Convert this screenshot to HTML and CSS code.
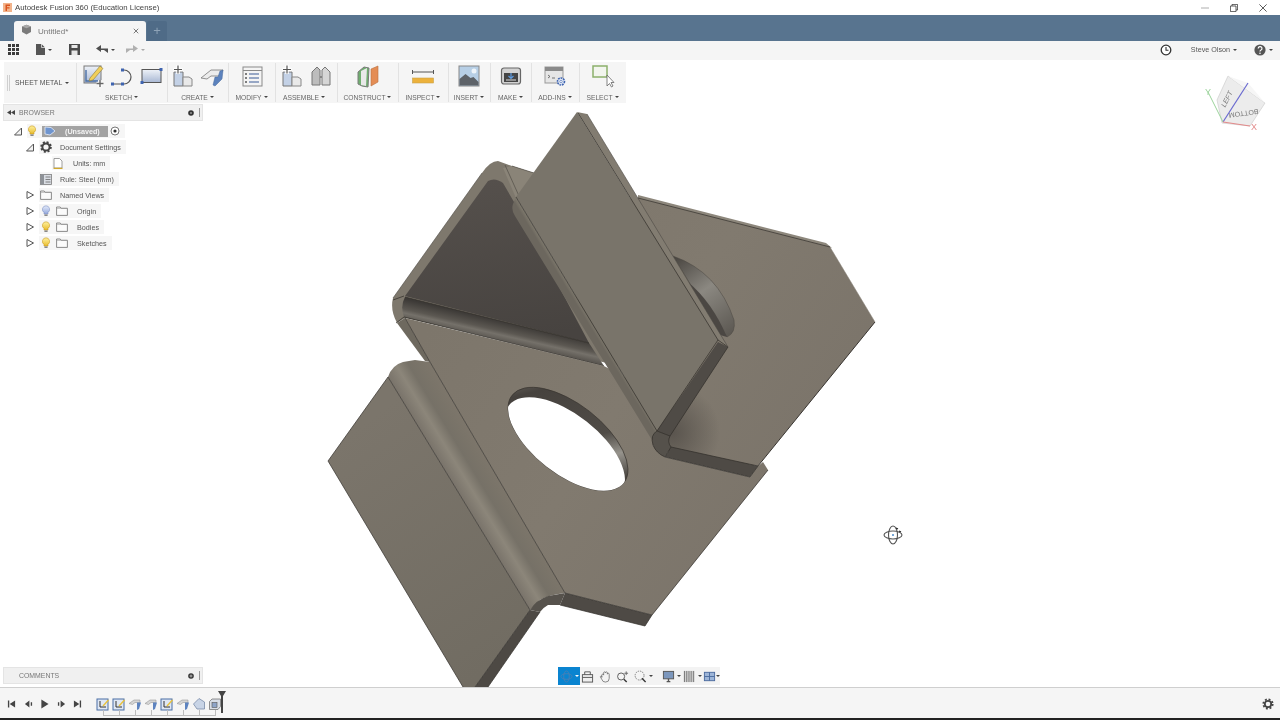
FILE: index.html
```html
<!DOCTYPE html>
<html lang="en">
<head>
<meta charset="utf-8">
<title>Autodesk Fusion 360 (Education License)</title>
<link rel="stylesheet" href="styles.css">
</head>
<body>
<svg class="sprite" aria-hidden="true">
  <defs>
    <linearGradient id="gBlue" x1="0" y1="0" x2="0" y2="1"><stop offset="0" stop-color="#eef2f8"/><stop offset="1" stop-color="#a9b8d4"/></linearGradient>
    <linearGradient id="gBulb" x1="0" y1="0" x2="0" y2="1"><stop offset="0" stop-color="#fff2a0"/><stop offset="1" stop-color="#e8bb2c"/></linearGradient>
    <linearGradient id="gBulbB" x1="0" y1="0" x2="0" y2="1"><stop offset="0" stop-color="#e4ebfa"/><stop offset="1" stop-color="#93a8dc"/></linearGradient>
  </defs>
  <symbol id="bulb" viewBox="0 0 10 12"><path d="M5 .8a3.6 3.6 0 0 0-2 6.6V9h4V7.4A3.6 3.6 0 0 0 5 .8z" fill="url(#gBulb)" stroke="#c99a22" stroke-width=".6"/><rect x="3.4" y="9.4" width="3.2" height="1.6" fill="#8a8a8a"/></symbol>
  <symbol id="bulbOff" viewBox="0 0 10 12"><path d="M5 .8a3.6 3.6 0 0 0-2 6.6V9h4V7.4A3.6 3.6 0 0 0 5 .8z" fill="url(#gBulbB)" stroke="#7f92c4" stroke-width=".6"/><rect x="3.4" y="9.4" width="3.2" height="1.6" fill="#8a8a8a"/></symbol>
  <symbol id="folder" viewBox="0 0 12 10"><path d="M.6 9.4V1h3.6l1 1.3h6.2v7.1z" fill="#fbfbfb" stroke="#6f6f6f" stroke-width=".8"/><path d="M.6 2.4h10.8" stroke="#9a9a9a" stroke-width=".6"/></symbol>
  <symbol id="open" viewBox="0 0 10 10"><path d="M1.5 9L8.5 2V9Z" fill="#f2f2f2" stroke="#555" stroke-width="1"/></symbol>
  <symbol id="closed" viewBox="0 0 10 10"><path d="M2 1.5L8.5 5 2 8.5Z" fill="#fff" stroke="#555" stroke-width="1"/></symbol>
  <symbol id="tlSketch" viewBox="0 0 14 14"><rect x="1" y="2" width="11" height="11" fill="#dfe7f4" stroke="#4a6fa5" stroke-width="1"/><path d="M4 4v6h6" fill="none" stroke="#333" stroke-width="1"/><path d="M6.5 8.5L12 2.5l1 1-5.5 6z" fill="#e8c23a"/></symbol>
  <symbol id="tlFlange" viewBox="0 0 14 14"><path d="M1 6.5L6 3h6v2.5H7L4.5 7.5z" fill="#d5d5d5" stroke="#888" stroke-width=".5"/><path d="M9 5.5h4L11 12 9 13z" fill="#5d83bf"/></symbol>
  <symbol id="tlCut" viewBox="0 0 14 14"><path d="M1.5 7L7 1.5 12.5 5v7H5z" fill="#c8d4e6" stroke="#7a8ca8" stroke-width=".8"/></symbol>
  <symbol id="tlBox" viewBox="0 0 14 14"><path d="M1.5 4.5L4 2h8.5v7.5L10 12.5H1.5z" fill="#d8dde6" stroke="#777" stroke-width=".8"/><rect x="4" y="5.5" width="5" height="5" fill="#8ea4c8" stroke="#555" stroke-width=".6"/></symbol>
</svg>

<div class="app">
  <header class="titlebar">
    <svg class="app-logo" viewBox="0 0 9 9"><rect width="9" height="9" fill="#f2b48c"/><path d="M2.5 1.5h4.5v1.4H4v1.4h2.5v1.3H4v2.4H2.5z" fill="#d9541e"/></svg>
    <span class="title-text">Autodesk Fusion 360 (Education License)</span>
    <div class="winctl">
      <svg viewBox="0 0 10 10"><path d="M0 5h10" stroke="#9a9a9a"/></svg>
      <svg viewBox="0 0 10 10"><path d="M.5 2.5h7v7h-7zM2.5 2.5v-2h7v7h-2" fill="none" stroke="#333"/></svg>
      <svg viewBox="0 0 10 10"><path d="M.5.5l9 9M9.5.5l-9 9" stroke="#333"/></svg>
    </div>
  </header>

  <div class="tabbar">
    <div class="tab">
      <svg class="tab-cube" viewBox="0 0 11 11"><path d="M1 2.5L5.5.8 10 2.5v5.5L5.5 10.5 1 8z" fill="#7b7b7b"/><path d="M1 2.5L5.5 4.2 10 2.5 5.5.8z" fill="#a8a8a8"/></svg>
      <span class="tab-name">Untitled*</span>
      <svg class="tab-close" viewBox="0 0 8 8"><path d="M1 1l6 6M7 1L1 7" stroke="#777" stroke-width="1.3"/></svg>
    </div>
    <div class="tab-new">+</div>
  </div>

  <div class="qat">
    <svg class="q-grid" viewBox="0 0 11 11"><g fill="#3c3c3c"><rect width="3" height="3"/><rect x="4" width="3" height="3"/><rect x="8" width="3" height="3"/><rect y="4" width="3" height="3"/><rect x="4" y="4" width="3" height="3"/><rect x="8" y="4" width="3" height="3"/><rect y="8" width="3" height="3"/><rect x="4" y="8" width="3" height="3"/><rect x="8" y="8" width="3" height="3"/></g></svg>
    <svg class="q-file" viewBox="0 0 9 11"><path d="M0 0h5.5L9 3.5V11H0z" fill="#555"/><path d="M5.5 0v3.5H9" fill="none" stroke="#f5f5f5" stroke-width=".7"/></svg>
    <i class="caret q-c1"></i>
    <svg class="q-save" viewBox="0 0 11 11"><path d="M0 0h11v11H0z" fill="#4a4a4a"/><rect x="2.5" y="1" width="6" height="3" fill="#e8e8e8"/><rect x="2.5" y="6.5" width="6" height="4.5" fill="#e8e8e8"/></svg>
    <svg class="q-undo" viewBox="0 0 12 9"><path d="M5 0L0 3.5 5 7V5h3l4 3V3.5H5z" fill="#4f4f4f"/></svg>
    <i class="caret q-c2"></i>
    <svg class="q-redo" viewBox="0 0 12 9"><path d="M7 0l5 3.5L7 7V5H4L0 8V3.5h7z" fill="#b0b0b0"/></svg>
    <i class="caret caret-light q-c3"></i>
    <div class="q-right">
      <svg class="q-clock" viewBox="0 0 12 12"><circle cx="6" cy="6" r="4.8" fill="#fff" stroke="#333" stroke-width="1.3"/><path d="M6 3v3.2h2.5" fill="none" stroke="#333" stroke-width="1.1"/></svg>
      <span class="user">Steve Olson</span><i class="caret q-c4"></i>
      <svg class="q-help" viewBox="0 0 12 12"><circle cx="6" cy="6" r="5.6" fill="#555"/><path d="M4.2 4.5a1.9 1.9 0 1 1 2.6 1.7c-.6.3-.8.5-.8 1.2" fill="none" stroke="#fff" stroke-width="1.2"/><circle cx="6" cy="9.2" r=".8" fill="#fff"/></svg>
      <i class="caret"></i>
    </div>
  </div>

  <main class="workspace">
    <svg class="model" viewBox="0 60 1280 627" aria-hidden="true">
      <defs>
        <linearGradient id="plate" gradientUnits="userSpaceOnUse" x1="420" y1="340" x2="760" y2="560"><stop offset="0" stop-color="#7d766b"/><stop offset=".5" stop-color="#817a6f"/><stop offset="1" stop-color="#7b746a"/></linearGradient>
        <linearGradient id="flangeL" gradientUnits="userSpaceOnUse" x1="340" y1="440" x2="500" y2="660"><stop offset="0" stop-color="#7b756b"/><stop offset="1" stop-color="#716c62"/></linearGradient>
        <linearGradient id="bendL" gradientUnits="userSpaceOnUse" x1="388" y1="377" x2="425.300" y2="354.300"><stop offset="0" stop-color="#79736a"/><stop offset=".3" stop-color="#8c867a"/><stop offset=".55" stop-color="#767167"/><stop offset=".8" stop-color="#7a7469"/><stop offset="1" stop-color="#7d766b"/></linearGradient>
        <linearGradient id="bendU" gradientUnits="userSpaceOnUse" x1="522" y1="215" x2="531" y2="209.500"><stop offset="0" stop-color="#6c675e"/><stop offset=".45" stop-color="#827d70"/><stop offset="1" stop-color="#78736a"/></linearGradient>
        <linearGradient id="bendB" gradientUnits="userSpaceOnUse" x1="498" y1="320" x2="493" y2="342"><stop offset="0" stop-color="#3c3936"/><stop offset=".45" stop-color="#5c5852"/><stop offset=".62" stop-color="#75716a"/><stop offset="1" stop-color="#4f4b46"/></linearGradient>
        <linearGradient id="inner" gradientUnits="userSpaceOnUse" x1="480" y1="180" x2="500" y2="340"><stop offset="0" stop-color="#55504c"/><stop offset="1" stop-color="#474340"/></linearGradient>
        <linearGradient id="ring" gradientUnits="userSpaceOnUse" x1="512" y1="395" x2="625" y2="483"><stop offset="0" stop-color="#6a665f"/><stop offset=".12" stop-color="#46423e"/><stop offset=".52" stop-color="#504c47"/><stop offset=".68" stop-color="#96938c"/><stop offset=".85" stop-color="#4a4641"/><stop offset="1" stop-color="#4a4641"/></linearGradient>
        <linearGradient id="moon" gradientUnits="userSpaceOnUse" x1="675" y1="258" x2="732" y2="335"><stop offset="0" stop-color="#4a4641"/><stop offset=".45" stop-color="#8b8881"/><stop offset="1" stop-color="#5b5751"/></linearGradient>
        <radialGradient id="shadow" gradientUnits="userSpaceOnUse" cx="672" cy="432" r="48"><stop offset="0" stop-color="#55504a" stop-opacity=".9"/><stop offset="1" stop-color="#55504a" stop-opacity="0"/></radialGradient>
        <clipPath id="holeClip"><ellipse cx="568" cy="439" rx="71" ry="35" transform="rotate(38 568 439)"/></clipPath>
        <clipPath id="rightClip"><polygon points="638,198 830,247 875,322 758,466 660,450 640,400"/></clipPath>
      </defs>

      <!-- right plate -->
      <polygon points="638,195 826,243 832,248 638,200" fill="#8d877c"/>
      <polygon points="638,198 830,247 875,322 758,466 660,450 640,400 600,200" fill="url(#plate)"/>
      <circle cx="672" cy="432" r="48" fill="url(#shadow)" clip-path="url(#rightClip)"/>
      <path d="M638,198L830,247" stroke="#3e3a35" stroke-width=".8" fill="none"/>
      <path d="M875,322L758,466" stroke="#37332f" stroke-width="1" fill="none"/>
      <path d="M830,247L875,322" stroke="#8a847a" stroke-width=".5" fill="none"/>
      <path d="M673,256Q718,272 734,320Q736,333 727,337L700,300Z" fill="url(#moon)" stroke="#4a4641" stroke-width=".5"/>
      <path d="M688,282Q712,302 727,337L720,335Z" fill="#4b4743"/>

      <!-- raised back flange with its dark interior -->
      <path d="M393,298L482,173Q490,161 498,161L512,166L534,173L516,198L530,230L625,367L405,318L397,323Q390,310 393,298Z" fill="#7e786d"/>
      <path d="M482,173L393,298" stroke="#4e4a45" stroke-width=".6" fill="none"/>
      <polygon points="503,168 512,166 534,173 516,198" fill="#8a8478"/>
      <path d="M505,165L519,196M512,166L534,173" stroke="#4a463f" stroke-width=".6" fill="none"/>
      <path d="M405,296L488,181Q495,177 503,183L514,202L589,343Z" fill="url(#inner)"/>
      <path d="M405,297L589,343L604,366L404,317Q400,306 405,297Z" fill="url(#bendB)"/>
      <path d="M405,297L589,343M404,317L604,366M404,296L393,300M404,317L396,323" stroke="#2f2c28" stroke-width=".7" fill="none"/>

      <!-- main plate -->
      <polygon points="397,323 405,318 430,362 425,361" fill="#6e695f"/>
      <polygon points="405,318 604,366 630,380 657,431 653,445 665,457 750,477 757,467 763,462 768,470 652,615 565,593 430,362" fill="url(#plate)"/>
      <path d="M405,318L430,362M768,470L652,615" stroke="#3a3631" stroke-width=".8" fill="none"/>
      <ellipse cx="568" cy="439" rx="71" ry="35" transform="rotate(38 568 439)" fill="url(#ring)" stroke="#3a3631" stroke-width=".7"/>
      <g clip-path="url(#holeClip)"><ellipse cx="565" cy="449" rx="71" ry="35" transform="rotate(38 565 449)" fill="#fff"/></g>

      <!-- left flange -->
      <polygon points="328,461 388,377 530,610 475,687 463,687" fill="url(#flangeL)"/>
      <path d="M388,377Q392,365 403,362L415,360L430,362L565,593Q548,595 540,600L530,610Z" fill="url(#bendL)"/>
      <polygon points="530,610 540,612 488,687 475,687" fill="#4d4944"/>
      <path d="M530,610Q536,600 548,596L565,593L560,605L548,605Q544,607 540,612Z" fill="#56524c"/>
      <polygon points="565,593 652,615 645,626 560,605" fill="#4e4a45"/>
      <path d="M388,377L530,610M430,362L565,593M530,610L475,687M540,612L488,687M565,593L652,615M560,605L645,626L652,615M328,461L388,377M328,461L463,687" stroke="#312e2a" stroke-width=".7" fill="none"/>

      <!-- upright flange -->
      <path d="M516,197L513,204Q511,210 515,216L655,445L665,440L657,431Z" fill="url(#bendU)"/>
      <polygon points="577,112 718,340 657,431 516,197" fill="#79746a"/>
      <polygon points="577,112 587,114 728,347 718,340" fill="#827c71"/>
      <polygon points="718,342 728,347 670,436 657,431" fill="#4f4b46"/>
      <path d="M657,431Q650,435 653,445Q656,453 665,457L671,447Q667,442 670,436Z" fill="#55514b"/>
      <polygon points="671,447 758,466 750,477 665,457" fill="#4e4a45"/>
      <path d="M578,113L718,340L728,347M718,340L657,431L516,197M728,347L670,436Q667,442 671,447L758,466L750,477L665,457Q656,453 653,445Q650,435 657,431M657,431L670,436M665,457L671,447" stroke="#2f2c28" stroke-width=".7" fill="none"/>
      <path d="M587,114L728,347" stroke="#4e4a44" stroke-width=".6" fill="none"/>
    </svg>

    <div class="ribbon">
      <div class="group g-sheet">
        <div class="grip"></div>
        <span class="workspace-name">SHEET METAL</span><i class="caret"></i>
      </div>
      <div class="group g-sketch">
        <div class="icons">
          <svg class="ico" viewBox="0 0 24 24"><rect x="3" y="2" width="17" height="17" fill="url(#gBlue)" stroke="#7a7a7a"/><path d="M5 6v11h12" fill="none" stroke="#4a6fa5" stroke-width="1.4"/><path d="M9 14L19 2l3 2.5L12 16l-4 1z" fill="#f1cf5a" stroke="#8b7a3a" stroke-width=".6"/><path d="M19 16v7M15.500 19.500h7" stroke="#fff" stroke-width="3.500"/><path d="M19 16v7M15.500 19.500h7" stroke="#666" stroke-width="1.400"/></svg>
          <svg class="ico" viewBox="0 0 24 24"><path d="M3 20h11a6.500 6.500 0 0 0 0-14h-1.500" fill="none" stroke="#555" stroke-width="1.200"/><rect x="1" y="18.500" width="3" height="3" fill="#3f64b0"/><rect x="11" y="18.500" width="3" height="3" fill="#3f64b0"/><rect x="11" y="4.500" width="3" height="3" fill="#3f64b0"/></svg>
          <svg class="ico" viewBox="0 0 24 24"><rect x="3" y="5.500" width="19" height="13" fill="url(#gBlue)" stroke="#555"/><rect x="20.500" y="4" width="3" height="3" fill="#3f64b0"/><rect x="1.500" y="17" width="3" height="3" fill="#3f64b0"/></svg>
        </div>
        <span class="lbl">SKETCH</span>
      </div>
      <div class="group g-create">
        <div class="icons">
          <svg class="ico" viewBox="0 0 24 24"><path d="M3 8h9V22H3z" fill="#c3d1e6" stroke="#777"/><path d="M12 13h6l3 2v7h-9z" fill="#e9e9e9" stroke="#888"/><path d="M7 1v9M2.500 5.500h9" stroke="#fff" stroke-width="3.500"/><path d="M7 1.500v8M3 5.500h8" stroke="#555" stroke-width="1.200"/></svg>
          <svg class="ico" viewBox="0 0 24 24"><path d="M1 14L11 6h12l-3 6H11l-4 3z" fill="#ececec" stroke="#777" stroke-width=".8"/><path d="M20 7l3-1-1 9-7 7-2-1 2-8h3z" fill="#5c82bd" stroke="#476a9f" stroke-width=".5"/></svg>
        </div>
        <span class="lbl">CREATE</span>
      </div>
      <div class="group g-modify">
        <div class="icons">
          <svg class="ico" viewBox="0 0 24 24"><rect x="3" y="3" width="19" height="19" fill="#f4f4f4" stroke="#8a8a8a"/><path d="M3 6.500h19" stroke="#8a8a8a"/><path d="M9 10h10M9 14h10M9 18h10" stroke="#3a5b96" stroke-width="1.200"/><path d="M5 10h2M5 14h2M5 18h2" stroke="#555" stroke-width="1.400"/></svg>
        </div>
        <span class="lbl">MODIFY</span>
      </div>
      <div class="group g-assemble">
        <div class="icons">
          <svg class="ico" viewBox="0 0 24 24"><path d="M3 8h9V22H3z" fill="#c3d1e6" stroke="#777"/><path d="M12 13h6l3 2v7h-9z" fill="#e9e9e9" stroke="#888"/><path d="M7 1v9M2.500 5.500h9" stroke="#fff" stroke-width="3.500"/><path d="M7 1.500v8M3 5.500h8" stroke="#555" stroke-width="1.200"/></svg>
          <svg class="ico" viewBox="0 0 24 24"><path d="M3 21V8l5-5 3 3v15z" fill="#bdbdbd" stroke="#777"/><path d="M13 21V6l3-3 5 5v13z" fill="#d6d6d6" stroke="#777"/><path d="M11 13h2" stroke="#555"/></svg>
        </div>
        <span class="lbl lbl-assemble">ASSEMBLE</span>
      </div>
      <div class="group g-construct">
        <div class="icons">
          <svg class="ico" viewBox="0 0 24 24"><path d="M2 8l6-5 5 1-1 19-6-1-4-2z" fill="#6fae6f" stroke="#7a7a7a"/><path d="M5 7l6-3-1 18-5-1z" fill="#e9e9e9"/><path d="M15 22V5l7-3v16z" fill="#e48d55" stroke="#b8703f" stroke-width=".6"/></svg>
        </div>
        <span class="lbl">CONSTRUCT</span>
      </div>
      <div class="group g-inspect">
        <div class="icons">
          <svg class="ico" viewBox="0 0 24 24"><path d="M1.500 8h21M1.500 6v4M22.500 6v4" stroke="#555" fill="none"/><rect x="1.500" y="14" width="21" height="5" fill="#ecb13b" stroke="#c9a24a" stroke-width=".6"/></svg>
        </div>
        <span class="lbl">INSPECT</span>
      </div>
      <div class="group g-insert">
        <div class="icons">
          <svg class="ico" viewBox="0 0 24 24"><rect x="2" y="2" width="20" height="20" fill="#b7cfe6" stroke="#888"/><circle cx="17" cy="7" r="2.500" fill="#eef4fa"/><path d="M2.500 21.500V15l6-5 5 4 3-1 5 5v3.500z" fill="#5d6268"/></svg>
        </div>
        <span class="lbl">INSERT</span>
      </div>
      <div class="group g-make">
        <div class="icons">
          <svg class="ico" viewBox="0 0 24 24"><rect x="2.500" y="4" width="19" height="16" rx="2.500" fill="#d2d2d2" stroke="#666" stroke-width="1.200"/><rect x="5" y="9" width="14" height="9" fill="#454545"/><path d="M12 9v5M9.500 12L12 14.500 14.500 12" stroke="#5e9be0" fill="none" stroke-width="1.200"/><path d="M7 16h10" stroke="#ddd"/></svg>
        </div>
        <span class="lbl">MAKE</span>
      </div>
      <div class="group g-addins">
        <div class="icons">
          <svg class="ico" viewBox="0 0 24 24"><rect x="2" y="3" width="18" height="16" fill="#e6e6e6" stroke="#999"/><rect x="2" y="3" width="18" height="4" fill="#8a8a8a"/><path d="M5 11l2 1.500L5 14M9 14h3" stroke="#555" fill="none" stroke-width=".8"/><circle cx="18" cy="17.500" r="3.500" fill="#dfe7f4" stroke="#3f64b0" stroke-width="1.600" stroke-dasharray="1.800 .8"/><circle cx="18" cy="17.500" r="1.200" fill="#fff" stroke="#3f64b0" stroke-width=".6"/></svg>
        </div>
        <span class="lbl">ADD-INS</span>
      </div>
      <div class="group g-select">
        <div class="icons">
          <svg class="ico" viewBox="0 0 24 24"><rect x="2" y="2" width="14" height="11" fill="#f2f5ee" stroke="#8cb06b" stroke-width="1.500"/><path d="M16 11v11l2.500-2.500 2 3.500 1.500-1-2-3.500h3z" fill="#fff" stroke="#666" stroke-width=".8"/></svg>
        </div>
        <span class="lbl">SELECT</span>
      </div>
    </div>

    <div class="panels">
      <aside class="browser">
        <div class="panel-head">
          <svg class="collapse" viewBox="0 0 8 5"><path d="M4 0v5L0 2.500zM8 0v5L4 2.500z" fill="#444"/></svg>
          <span class="panel-title">BROWSER</span>
          <svg class="pin" viewBox="0 0 6 6"><circle cx="3" cy="3" r="2.800" fill="#333"/><circle cx="3" cy="3" r=".8" fill="#ddd"/></svg>
          <span class="pipe"></span>
        </div>
        <ul class="tree">
          <li class="row d0">
            <svg class="tri"><use href="#open"/></svg>
            <div class="hl">
              <svg class="bulb"><use href="#bulb"/></svg>
              <div class="selected">
                <svg class="root-icon" viewBox="0 0 12 10"><path d="M1 1l6 .5 4 3.500-5 4-5-1z" fill="#6f95cf" stroke="#e8eef8" stroke-width=".8"/></svg>
                <span class="root-name">(Unsaved)</span>
              </div>
              <svg class="radio" viewBox="0 0 10 10"><circle cx="5" cy="5" r="4" fill="#fff" stroke="#555" stroke-width=".8"/><circle cx="5" cy="5" r="1.600" fill="#333"/></svg>
            </div>
          </li>
          <li class="row d1">
            <svg class="tri"><use href="#open"/></svg>
            <div class="hl">
              <svg class="gear" viewBox="0 0 12 12"><circle cx="6" cy="6" r="3.600" fill="none" stroke="#444" stroke-width="2"/><circle cx="6" cy="6" r="4.800" fill="none" stroke="#444" stroke-width="2" stroke-dasharray="2 1.770"/></svg>
              <span class="name n-doc">Document Settings</span>
            </div>
          </li>
          <li class="row d2">
            <div class="hl">
              <svg class="doc" viewBox="0 0 10 11"><path d="M1 .5h5.500L9 3v7H1z" fill="#fff" stroke="#888" stroke-width=".8"/><path d="M.5 10.400h9" stroke="#d1a92c" stroke-width="1.200"/></svg>
              <span class="name n-units">Units: mm</span>
            </div>
          </li>
          <li class="row d1b">
            <div class="hl">
              <svg class="rule" viewBox="0 0 12 11"><rect x=".5" y=".5" width="11" height="10" fill="#d9dde3" stroke="#7d7d7d" stroke-width=".8"/><rect x=".5" y=".5" width="3.500" height="10" fill="#8e9298"/><path d="M5.500 3h5M5.500 5.500h5M5.500 8h5" stroke="#6a6a6a" stroke-width=".8"/></svg>
              <span class="name n-rule">Rule: Steel (mm)</span>
            </div>
          </li>
          <li class="row d1">
            <svg class="tri"><use href="#closed"/></svg>
            <div class="hl">
              <svg class="folder"><use href="#folder"/></svg>
              <span class="name n-views">Named Views</span>
            </div>
          </li>
          <li class="row d1">
            <svg class="tri"><use href="#closed"/></svg>
            <div class="hl">
              <svg class="bulb b2"><use href="#bulbOff"/></svg>
              <svg class="folder f2"><use href="#folder"/></svg>
              <span class="name n-origin">Origin</span>
            </div>
          </li>
          <li class="row d1">
            <svg class="tri"><use href="#closed"/></svg>
            <div class="hl">
              <svg class="bulb b2"><use href="#bulb"/></svg>
              <svg class="folder f2"><use href="#folder"/></svg>
              <span class="name n-origin">Bodies</span>
            </div>
          </li>
          <li class="row d1">
            <svg class="tri"><use href="#closed"/></svg>
            <div class="hl">
              <svg class="bulb b2"><use href="#bulb"/></svg>
              <svg class="folder f2"><use href="#folder"/></svg>
              <span class="name n-origin">Sketches</span>
            </div>
          </li>
        </ul>
      </aside>
      <aside class="comments">
        <div class="panel-head">
          <span class="collapse"></span>
          <span class="panel-title">COMMENTS</span>
          <svg class="pin" viewBox="0 0 6 6"><circle cx="3" cy="3" r="2.800" fill="#333"/><path d="M3 1.500v3M1.500 3h3" stroke="#ddd" stroke-width=".7"/></svg>
          <span class="pipe"></span>
        </div>
      </aside>
    </div>

    <div class="viewcube">
      <svg viewBox="0 0 64 64">
        <path d="M23 5L60 32 45 55 17 52 12 29z" fill="#ececec" stroke="#c8c8c8" stroke-width=".6"/>
        <path d="M23 5L43 12 60 32 45 21z" fill="#f6f6f6"/>
        <path d="M18 51L43 12" stroke="#6a6ad0" stroke-width="1.200"/>
        <path d="M18 51L3 21" stroke="#9bd39b" stroke-width="1"/>
        <path d="M18 51L45 55" stroke="#e28a8a" stroke-width="1.200"/>
        <text class="cube-txt" transform="translate(20 37) rotate(-63) skewX(-10)">LEFT</text>
        <text class="cube-txt" transform="translate(53 38) rotate(172)">BOTTOM</text>
        <text class="cube-axis cube-g" x="0" y="24">Y</text>
        <text class="cube-axis cube-r" x="46" y="59">X</text>
      </svg>
    </div>

    <svg class="orbit-cursor" viewBox="0 0 22 22"><ellipse cx="11" cy="11" rx="4.500" ry="9" fill="none" stroke="#555" stroke-width="1.100"/><ellipse cx="11" cy="11" rx="9" ry="4" fill="none" stroke="#555" stroke-width="1.100"/><circle cx="11" cy="11" r="1" fill="#4a8ac9"/><path d="M14 4l2 1M17 7l2 1" stroke="#222" stroke-width="1.200"/></svg>

    <div class="navbar">
      <div class="nav-active">
        <svg class="nv" viewBox="0 0 14 14"><ellipse cx="7" cy="7" rx="3" ry="6" fill="none" stroke="#4b7fb3"/><ellipse cx="7" cy="7" rx="6" ry="3" fill="none" stroke="#4b7fb3"/></svg>
        <i class="caret caret-white"></i>
      </div>
      <svg class="nv n1" viewBox="0 0 14 14"><rect x="1.500" y="5" width="11" height="8" fill="#eee" stroke="#555"/><path d="M1.500 8h11M4 5V2h6v3" fill="none" stroke="#555"/></svg>
      <svg class="nv n2" viewBox="0 0 14 14"><path d="M3 8V5.500a1 1 0 0 1 2 0V3a1 1 0 0 1 2 0v0a1 1 0 0 1 2 0v1.500a1 1 0 0 1 2 0V9a4 4 0 0 1-4 4H7a4 4 0 0 1-4-3L1.500 7.500a1 1 0 0 1 1.500-1z" fill="#f4f4f4" stroke="#666" stroke-width=".8"/></svg>
      <svg class="nv n3" viewBox="0 0 14 14"><circle cx="5.500" cy="7" r="3.800" fill="#f4f4f4" stroke="#555"/><path d="M8.500 10l3 3" stroke="#333" stroke-width="1.500"/><path d="M11 1.500v4M9 3.500h4" stroke="#666"/></svg>
      <svg class="nv n4" viewBox="0 0 14 14"><circle cx="6" cy="6" r="4.800" fill="#f4f4f4" stroke="#777" stroke-dasharray="1.500 1"/><path d="M8.500 9l4 4" stroke="#333" stroke-width="1.500"/></svg>
      <i class="caret"></i>
      <svg class="nv n5" viewBox="0 0 14 14"><rect x="1.500" y="1.500" width="11" height="8" fill="#7c97bd" stroke="#555"/><path d="M5 12.500h4M7 9.500v3" stroke="#555" stroke-width="1.500"/></svg>
      <i class="caret"></i>
      <svg class="nv n6" viewBox="0 0 14 14"><path d="M1.500 1v12M3.500 1v12M5.500 1v12M7.500 1v12M9.500 1v12M11.500 1v12" stroke="#666"/></svg>
      <i class="caret"></i>
      <svg class="nv n7" viewBox="0 0 14 14"><rect x="1.500" y="2.500" width="11" height="9" fill="#9db5d8" stroke="#4b6b9e"/><path d="M7 2.500v9M1.500 7h11" stroke="#4b6b9e"/></svg>
      <i class="caret"></i>
    </div>
  </main>

  <footer class="timeline">
    <div class="tl-controls">
      <svg class="tc" viewBox="0 0 10 10"><path d="M1 1h1.500v8H1zM9 1v8L3 5z" fill="#444"/></svg>
      <svg class="tc" viewBox="0 0 10 10"><path d="M6 1v8L1 5zM7.500 3H9v4H7.500z" fill="#444"/></svg>
      <svg class="tc" viewBox="0 0 10 10"><path d="M1.500 0v10L9.500 5z" fill="#444"/></svg>
      <svg class="tc" viewBox="0 0 10 10"><path d="M4 1v8l5-4zM1 3h1.500v4H1z" fill="#444"/></svg>
      <svg class="tc" viewBox="0 0 10 10"><path d="M1 1v8l6-4zM7.500 1H9v8H7.500z" fill="#444"/></svg>
    </div>
    <div class="tl-items">
      <svg class="ti"><use href="#tlSketch"/></svg>
      <svg class="ti"><use href="#tlSketch"/></svg>
      <svg class="ti"><use href="#tlFlange"/></svg>
      <svg class="ti"><use href="#tlFlange"/></svg>
      <svg class="ti"><use href="#tlSketch"/></svg>
      <svg class="ti"><use href="#tlFlange"/></svg>
      <svg class="ti"><use href="#tlCut"/></svg>
      <svg class="ti"><use href="#tlBox"/></svg>
      <svg class="tl-marker" viewBox="0 0 8 22"><path d="M0 0h8L5 5v17H3V5z" fill="#444"/></svg>
    </div>
    <svg class="tl-gear" viewBox="0 0 12 12"><circle cx="6" cy="6" r="3.200" fill="none" stroke="#444" stroke-width="1.800"/><circle cx="6" cy="6" r="4.700" fill="none" stroke="#444" stroke-width="1.800" stroke-dasharray="1.900 1.790"/></svg>
  </footer>
</div>
</body>
</html>
```
FILE: styles.css
```css
* { box-sizing: border-box; }
html, body { margin: 0; padding: 0; }
body { width: 1280px; height: 720px; overflow: hidden; background: #fff; font-family: "Liberation Sans", Arial, sans-serif; color: #666; }
ul { list-style: none; margin: 0; padding: 0; }
svg { display: block; flex: none; }
.sprite { position: absolute; width: 0; height: 0; }
.app { display: flex; flex-direction: column; height: 720px; filter: blur(.3px); }

.caret { display: block; flex: none; width: 0; height: 0; border-left: 2px solid transparent; border-right: 2px solid transparent; border-top: 2.500px solid #444; }
.caret-light { border-top-color: #aaa; }
.caret-white { border-top-color: #fff; }

/* title bar */
.titlebar { height: 15px; display: flex; align-items: center; background: #fff; padding-left: 3px; }
.app-logo { width: 9px; height: 9px; }
.title-text { margin-left: 3px; font-size: 7.800px; color: #444; white-space: nowrap; }
.winctl { margin-left: auto; display: flex; align-items: center; gap: 21px; padding-right: 13px; }
.winctl svg { width: 8px; height: 8px; }

/* tabs */
.tabbar { height: 26px; background: #58748f; display: flex; align-items: flex-end; padding-left: 14px; gap: 1px; }
.tab { width: 132px; height: 20px; background: #f5f5f5; border-radius: 3px 3px 0 0; display: flex; align-items: center; padding-left: 7px; }
.tab-cube { width: 11px; height: 11px; margin-top: -3px; }
.tab-name { margin-left: 6px; font-size: 8px; color: #777; }
.tab-close { width: 6px; height: 6px; margin-left: auto; margin-right: 7px; }
.tab-new { width: 20px; height: 20px; background: #4f6b87; border-radius: 2px 2px 0 0; color: #8ea3b7; font-size: 13px; line-height: 19px; text-align: center; }

/* quick access */
.qat { height: 19px; background: #f5f5f5; display: flex; align-items: center; padding: 0 0 2px 8px; }
.q-grid { width: 11px; height: 11px; }
.q-file { width: 9px; height: 11px; margin-left: 17px; }
.q-c1 { margin-left: 3px; }
.q-save { width: 11px; height: 11px; margin-left: 17px; }
.q-undo { width: 12px; height: 9px; margin-left: 16px; }
.q-c2 { margin-left: 3px; }
.q-redo { width: 12px; height: 9px; margin-left: 11px; }
.q-c3 { margin-left: 3px; }
.q-right { margin-left: auto; display: flex; align-items: center; padding-right: 7px; }
.q-clock { width: 12px; height: 12px; }
.user { margin-left: 19px; font-size: 7.200px; color: #555; }
.q-c4 { margin-left: 3px; }
.q-help { width: 12px; height: 12px; margin-left: 17px; margin-right: 3px; }

/* workspace */
.workspace { position: relative; flex: 1; min-height: 0; display: flex; flex-direction: column; overflow: hidden; background: #fff; }
.model { position: absolute; left: 0; top: 0; width: 1280px; height: 627px; }

/* ribbon */
.ribbon { position: relative; display: flex; width: 622px; height: 41px; margin: 2px 0 0 4px; background: #f5f5f5; flex: none; }
.group { position: relative; display: flex; flex-direction: column; align-items: center; padding-top: 2px; }
.group + .group::before { content: ""; position: absolute; left: 0; top: 1px; bottom: 1px; width: 1px; background: #e2e2e2; }
.icons { display: flex; height: 24px; gap: 5px; justify-content: center; }
.ico { width: 24px; height: 24px; }
.lbl { display: flex; align-items: center; gap: 2px; margin-top: 4.500px; font-size: 6.700px; line-height: 9px; color: #666; white-space: nowrap; }
.lbl::after { content: ""; width: 0; height: 0; border-left: 2px solid transparent; border-right: 2px solid transparent; border-top: 2.500px solid #444; }
.lbl-assemble { margin-right: 4px; }
.g-sheet { width: 72px; flex-direction: row; align-items: center; padding: 0 0 0 3px; }
.grip { width: 3px; height: 16px; border-left: 1px solid #cfcfcf; border-right: 1px solid #cfcfcf; margin-right: 5px; }
.workspace-name { font-size: 6.900px; color: #555; white-space: nowrap; margin-right: 3px; }
.g-sketch { width: 91px; }
.g-create { width: 61px; }
.g-modify { width: 47px; }
.g-assemble { width: 62px; }
.g-construct { width: 61px; }
.g-inspect { width: 50px; }
.g-insert { width: 42px; }
.g-make { width: 41px; }
.g-addins { width: 48px; }
.g-select { width: 47px; }

/* panels */
.panels { position: absolute; left: 3px; top: 44px; bottom: 3px; width: 200px; display: flex; flex-direction: column; justify-content: space-between; }
.panel-head { height: 17px; display: flex; align-items: center; background: #f0f0f0; border: 1px solid #e4e4e4; padding-left: 3px; }
.collapse { width: 8px; height: 5px; flex: none; }
.panel-title { margin-left: 4px; font-size: 6.900px; color: #777; }
.pin { width: 6px; height: 6px; margin-left: auto; }
.pipe { width: 1px; height: 9px; background: #999; margin: 0 2px 0 5px; }

/* tree */
.tree { margin-top: 2px; }
.row { height: 16px; display: flex; align-items: center; }
.d0 { padding-left: 10px; }
.d1 { padding-left: 22px; }
.d1b { padding-left: 36px; }
.d2 { padding-left: 49px; }
.tri { width: 10px; height: 10px; }
.hl { height: 14px; display: flex; align-items: center; background: #f6f6f6; margin-left: 4px; padding-right: 5px; }
.d1b .hl, .d2 .hl { margin-left: 0; }
.bulb { width: 10px; height: 12px; margin-left: 0; }
.selected { display: flex; align-items: center; height: 11px; width: 66px; background: #a3a3a3; margin-left: 5px; padding-left: 2px; }
.root-icon { width: 12px; height: 10px; }
.root-name { margin-left: 9px; font-size: 7.200px; font-weight: bold; color: #f4f4f4; }
.radio { width: 10px; height: 10px; margin-left: 2px; }
.gear { width: 12px; height: 12px; margin-left: 1px; }
.name { font-size: 7.200px; color: #555; white-space: nowrap; }
.n-doc { margin-left: 8px; }
.doc { width: 10px; height: 11px; margin-left: 1px; }
.n-units { margin-left: 10px; }
.rule { width: 12px; height: 11px; margin-left: 1px; }
.n-rule { margin-left: 8px; }
.folder { width: 12px; height: 10px; margin-left: 1px; }
.n-views { margin-left: 8px; }
.b2 { margin-left: 2px; }
.f2 { margin-left: 5px; }
.n-origin { margin-left: 9px; }

/* view cube, cursor */
.viewcube { position: absolute; right: 11px; top: 11px; width: 64px; height: 64px; }
.viewcube svg { width: 64px; height: 64px; }
.cube-txt { font-size: 7px; fill: #777; font-family: "Liberation Sans", Arial, sans-serif; }
.cube-axis { font-size: 9px; font-family: "Liberation Sans", Arial, sans-serif; }
.cube-g { fill: #9bd39b; }
.cube-r { fill: #e28a8a; }
.orbit-cursor { position: absolute; left: 882px; top: 464px; width: 22px; height: 22px; }

/* navigation bar */
.navbar { position: absolute; left: 558px; bottom: 2px; width: 162px; height: 18px; background: #f3f3f3; display: flex; align-items: center; }
.nav-active { width: 22px; height: 18px; background: #0a84d0; display: flex; align-items: center; padding-left: 2px; gap: 2px; }
.nv { width: 13px; height: 13px; }
.n1 { margin-left: 1px; }
.n2 { margin-left: 5px; }
.n3 { margin-left: 4px; }
.n4 { margin-left: 5px; }
.navbar > .caret { margin-left: 2px; }
.n5 { margin-left: 9px; }
.n6 { margin-left: 2px; }
.n7 { margin-left: 1px; }
.navbar > .n7 + .caret { margin-left: 0; }

/* timeline */
.timeline { height: 33px; flex: none; background: #f5f5f5; border-top: 1px solid #cfcfcf; border-bottom: 2px solid #222; display: flex; align-items: center; padding: 2px 6px 0 7px; }
.tl-controls { display: flex; gap: 7.500px; }
.tc { width: 9px; height: 10px; }
.tl-items { position: relative; display: flex; align-items: center; gap: 2px; margin-left: 14px; }
.tl-items::after { content: ""; position: absolute; left: 7px; top: 15px; width: 113px; height: 5px; border-bottom: 1px solid #bdbdbd; background: repeating-linear-gradient(90deg, #bdbdbd 0 1px, transparent 1px 16px); }
.ti { width: 14px; height: 14px; }
.tl-marker { width: 8px; height: 22px; margin-left: -6px; margin-top: -4px; }
.tl-gear { width: 12px; height: 12px; margin-left: auto; }
```
